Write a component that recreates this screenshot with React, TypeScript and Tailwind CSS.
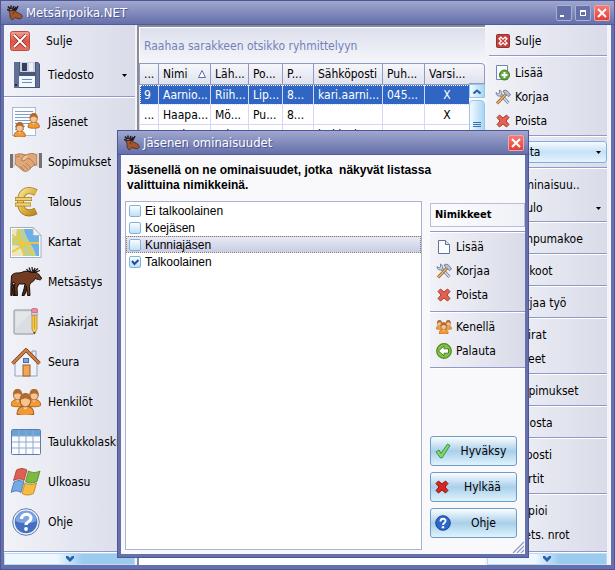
// src/App.tsx
import React, { useState } from 'react';

interface MenuItem {
  label: string;
  icon?: React.ReactNode;
  dropdown?: boolean;
  highlighted?: boolean;
}

interface Trait {
  id: string;
  label: string;
}

// --- Icons ---
const MooseHeadIcon = () => (
  <svg viewBox="0 0 16 16" className="h-4 w-4 shrink-0" aria-hidden="true">
    <path d="M1 1.500 3 4M4 .5v3.500M7 1 5.500 4M0 4.500 4 6l3-2M9 2 7 5M11 1 9 5 6 6" stroke="#211a1c" strokeWidth="1.500" fill="none" />
    <path d="M2 6c2-1 4-1 5.500 0l5 2.500c2 .5 3 2.500 2.500 4-.7 1.500-2.500 1.500-4 1L8 12.500c-1 .2-1.500 1.500-2.500 2.500C4 14.500 2.500 12 3 9Z" fill="#a2542b" stroke="#3c1e14" strokeWidth=".7" />
    <circle cx="6.500" cy="8" r=".6" fill="#1d0e08" />
  </svg>
);

const CloseTileIcon = () => (
  <svg viewBox="0 0 20 20" className="h-5 w-5" aria-hidden="true">
    <defs>
      <linearGradient id="closeTile" x1="0" y1="0" x2="0" y2="1">
        <stop offset="0" stopColor="#f0a396" />
        <stop offset=".5" stopColor="#dd5443" />
        <stop offset="1" stopColor="#e2745f" />
      </linearGradient>
    </defs>
    <rect x=".5" y=".5" width="19" height="19" rx="2" fill="url(#closeTile)" stroke="#bf4b42" />
    <path d="m4 4 12 12M16 4 4 16" stroke="#8c2a25" strokeWidth="3.500" />
    <path d="m4 4 12 12M16 4 4 16" stroke="#fff" strokeWidth="2" />
  </svg>
);

const FloppyIcon = () => (
  <svg viewBox="0 0 26 26" className="h-[26px] w-[26px]" aria-hidden="true">
    <path d="M0 0h24l2 2v24H0Z" fill="#49587a" />
    <path d="M0 0h5v26H0ZM22 1h3v24h-3Z" fill="#5f7094" />
    <rect x="6" y="0" width="15" height="10" fill="#c9d2e0" />
    <rect x="8" y="1" width="5" height="8" fill="#35415c" />
    <rect x="15" y="1" width="4" height="8" fill="#eef2f8" />
    <rect x="5" y="14" width="16" height="11" fill="#f4f8fc" />
    <path d="M8 17.500h10M8 20.500h10" stroke="#5793c9" />
    <rect x="1" y="22" width="2" height="2" fill="#1f2940" />
  </svg>
);

const Person = ({ x, y, s = 1 }: { x: number; y: number; s?: number }) => (
  <g transform={`translate(${x} ${y}) scale(${s})`}>
    <path d="M0 15c0-4 2.500-5.500 6-5.500s6 1.500 6 5.500c-2 1.500-10 1.500-12 0Z" fill="#f09a35" stroke="#a85b1c" strokeWidth=".8" />
    <path d="M4 9.500 6 12l2-2.500" fill="#fde3bd" />
    <ellipse cx="6" cy="5.500" rx="3.800" ry="4.500" fill="#f6c48c" stroke="#9c5a2b" strokeWidth=".8" />
    <path d="M2 6.500C1.500 1.500 3.500 0 6 0s4.500 1.500 4 6.500C9 4 7.500 4.500 6 3.800 4.500 4.500 3 4 2 6.500Z" fill="#b06a32" />
  </g>
);

const MembersIcon = () => (
  <svg viewBox="0 0 28 30" className="h-[30px] w-7" aria-hidden="true">
    <rect x=".5" y=".5" width="23" height="28" fill="#fbfcfe" stroke="#a9bbd2" />
    <path d="M3 4.500h18M3 7.500h18M3 10.500h18M3 13.500h18M3 16.500h18M3 19.500h10M3 22.500h9" stroke="#7f9cc6" />
    <Person x={16} y={6} s={0.95} />
    <Person x={2} y={15} s={0.95} />
  </svg>
);

const HandshakeIcon = () => (
  <svg viewBox="0 0 32 20" className="h-5 w-8" aria-hidden="true">
    <path d="M5 3c4-2 7-1 11 0 4-2 8-2 11 0v10c-3 0-5 1-7 4-3 3-6 3-8 1l-7-6Z" fill="#e0a878" stroke="#9c6a46" strokeWidth=".8" />
    <path d="M16 3c-3 1-5 4-4 6 3 0 4-2 6-3 3 1 5 4 7 7" fill="#efc59c" stroke="#a87148" strokeWidth=".9" />
    <path d="m16 11 5 5M13 13l5 4M10 14l4 4M6 5l4-1" stroke="#a87148" strokeWidth=".8" fill="none" />
    <path d="M0 2h3v14H0ZM29 1h3v15h-3Z" fill="#77726f" />
    <path d="M3 2h2v13H3ZM27 1h2v14h-2Z" fill="#d6d5d8" />
  </svg>
);

const EuroIcon = () => (
  <svg viewBox="0 0 28 30" className="h-[30px] w-7" aria-hidden="true">
    <defs>
      <linearGradient id="euroGold" x1="0" y1="0" x2="1" y2="1">
        <stop offset="0" stopColor="#f7e08e" />
        <stop offset=".5" stopColor="#dfb544" />
        <stop offset="1" stopColor="#b98720" />
      </linearGradient>
    </defs>
    <path d="M24 5.500C13 0 8.500 7 8.500 15s5 14 15.500 9" fill="none" stroke="#a67c22" strokeWidth="7" />
    <path d="M24 5.500C13 0 8.500 7 8.500 15s5 14 15.500 9" fill="none" stroke="url(#euroGold)" strokeWidth="5.400" />
    <path d="M3 12h17M3 17.500h16" stroke="#a67c22" strokeWidth="4" />
    <path d="M3.500 12h16M3.500 17.500h15" stroke="#f0cf6c" strokeWidth="2.600" />
  </svg>
);

const MapIcon = () => (
  <svg viewBox="0 0 32 31" className="h-[31px] w-8" aria-hidden="true">
    <path d="M.5.5H23l8 8v22H.5Z" fill="#fff" stroke="#9fb0c0" />
    <path d="M2 2h20l7 7v20H2Z" fill="#b8d29a" />
    <path d="M14 2h8l7 7v20h-3C25 20 17 15 14 2Z" fill="#6eb0e6" />
    <path d="M2 2h5l-1 7-4 2ZM2 18l7 1 6 10H2Z" fill="#e9e6c0" />
    <path d="M2 15c8 3 14 0 27 1M8 2c1 9 4 12 6 27M2 25l15-9 6 13M2 8l12 8" stroke="#f4c735" strokeWidth="1.800" fill="none" />
    <path d="M23 .5v8h8Z" fill="#eef2f7" stroke="#9fb0c0" strokeWidth=".8" />
  </svg>
);

const MooseIcon = () => (
  <svg viewBox="0 0 32 30" className="h-[30px] w-8" aria-hidden="true">
    <path d="M4 17 2.500 22l.5 6.500h2.300L5 23l3-4M15 17l-1 5-2 6.500h2.300L17 22" fill="#4a2615" stroke="#150d0a" />
    <path
      d="M1.500 9C2.500 6.500 6 5.500 9 6c3-.2 5-2.200 8-1.700 2 .2 4 .2 6 1.200 2-.5 4 0 5.500 1.500L31.500 11c.3 1.500-1.500 2.300-3 1.500L25 11.500c-.5 2-2 3-3.500 4-1.500 1-2 2-2 4l.5 9h-2.400L16.500 20l-1.300-3.500c-2 .8-4.500.7-6.200.2L7 20.500l.5 8H5.200L4.500 20 5 16l-2-1-.8 5-.2 8.500H.8L1 17Z"
      fill="#733b22"
      stroke="#150d0a"
      strokeLinejoin="round"
    />
    <path d="M16.500 2c1 2 3 3 6 3.500M19 .5l1.500 3.500M22 0l.5 4.500M25 1l-2 4M28 1.500l-4.500 3.500M30 3.500 24 5.500" stroke="#150d0a" strokeWidth="1.200" fill="none" />
  </svg>
);

const DocumentPencilIcon = () => (
  <svg viewBox="0 0 26 28" className="h-7 w-[26px]" aria-hidden="true">
    <rect x="1" y="2" width="20" height="24" rx="1" fill="#dadde2" stroke="#8f949d" />
    <path d="M3 4h16L3 20Z" fill="#e4e6ea" />
    <path d="M19 7h5v14l-2.500 5-2.500-5Z" fill="#f6cf59" stroke="#b58421" strokeWidth=".8" />
    <path d="M21.500 7v14" stroke="#d99f26" strokeWidth="1.300" />
    <rect x="18.500" y="4" width="6" height="3" fill="#cfd3da" stroke="#8f949d" strokeWidth=".6" />
    <rect x="18.500" y=".5" width="6" height="4" rx="1.500" fill="#f08a9e" stroke="#c65a72" strokeWidth=".7" />
    <path d="m20.500 24 1 2.500 1-2.500Z" fill="#3c3c3c" />
  </svg>
);

const HouseIcon = () => (
  <svg viewBox="0 0 30 30" className="h-[30px] w-[30px]" aria-hidden="true">
    <path d="M21 4h4v8h-4Z" fill="#e8ecf3" stroke="#8795b0" />
    <path d="M4 14 15 4l11 10v15H4Z" fill="#eef3fa" stroke="#90a2c2" />
    <rect x="12" y="18" width="7" height="11" fill="#f0a659" stroke="#a35c20" />
    <rect x="12.500" y="11.500" width="5" height="4" fill="#7fa6e0" stroke="#4b6cab" />
    <path d="M1.500 16.500 15 3l13.500 13.500" fill="none" stroke="#7d3b18" strokeWidth="3.600" strokeLinejoin="round" />
    <path d="M1.500 16.500 15 3l13.500 13.500" fill="none" stroke="#d38244" strokeWidth="2" />
  </svg>
);

const PeopleIcon = ({ className }: { className: string }) => (
  <svg viewBox="0 0 30 26" className={className} aria-hidden="true">
    <Person x={0} y={0} s={1.1} />
    <Person x={16.5} y={0} s={1.1} />
    <Person x={6} y={4} s={1.4} />
  </svg>
);

const SpreadsheetIcon = () => (
  <svg viewBox="0 0 30 26" className="h-[26px] w-[30px]" aria-hidden="true">
    <rect x=".5" y=".5" width="29" height="25" rx="1" fill="#fbfcff" stroke="#5f7bab" />
    <rect x="1" y="1" width="28" height="6" fill="#66a4d8" />
    <path d="M8 1v24M15 1v24M22 1v24M1 7h28M1 13h28M1 19h28" stroke="#93a9d0" />
  </svg>
);

const WindowsIcon = () => (
  <svg viewBox="0 0 30 28" className="h-7 w-[30px]" aria-hidden="true">
    <path d="M5.500 2c4-2 7-2 10.500 0l-3 10.500c-3-2-7-2-10.500 0Z" fill="#dd6054" stroke="#a63830" strokeWidth=".8" />
    <path d="M17.500 3c4 2 7 2 11.500 0l-3 10.500c-4 2-8 2-11.500 0Z" fill="#7dba41" stroke="#4b8423" strokeWidth=".8" />
    <path d="M3 14c3-2 7-2 10 0l-3 10.500c-3-2-6-2-10 0Z" fill="#76a9e0" stroke="#3f6eb0" strokeWidth=".8" />
    <path d="M14 15c4 2 8 2 11.500 0l-3 10.500c-4 2-8 2-11.500 0Z" fill="#f6bd42" stroke="#bd7d18" strokeWidth=".8" />
  </svg>
);

const HelpIcon = ({ className }: { className: string }) => (
  <svg viewBox="0 0 28 28" className={className} aria-hidden="true">
    <circle cx="14" cy="14" r="13.300" fill="#f3f6fb" stroke="#6178ab" />
    <circle cx="14" cy="14" r="11.300" fill="#4470c2" />
    <path d="M3.500 13a10.500 10.500 0 0 1 21 0c-6 3-15 3-21 0Z" fill="#7ba3e2" />
    <path d="M9.500 11c0-6 9.500-6 9.500-1 0 4-5 3.500-5 7" stroke="#fff" strokeWidth="3.200" fill="none" />
    <circle cx="14" cy="21" r="1.900" fill="#fff" />
  </svg>
);

const SmallHelpIcon = () => (
  <svg viewBox="0 0 16 16" className="h-4 w-4" aria-hidden="true">
    <circle cx="8" cy="8" r="7.300" fill="#2c68c8" stroke="#1c469a" />
    <path d="M5.500 6.500c0-3.500 5-3.500 5-.7C10.500 8 8 7.800 8 10" stroke="#fff" strokeWidth="1.900" fill="none" />
    <circle cx="8" cy="12.200" r="1.200" fill="#fff" />
  </svg>
);

const SmallCloseIcon = () => (
  <svg viewBox="0 0 14 14" className="h-3.5 w-3.5" aria-hidden="true">
    <rect x=".5" y=".5" width="13" height="13" rx="1" fill="#c4423a" stroke="#8f3430" />
    <path d="m3.500 3.500 7 7M10.500 3.500l-7 7" stroke="#fff" strokeWidth="3.800" />
    <path d="m4.500 4.500 5 5M9.500 4.500l-5 5" stroke="#c4423a" strokeWidth="1.300" />
  </svg>
);

const AddIcon = () => (
  <svg viewBox="0 0 16 16" className="h-4 w-4" aria-hidden="true">
    <path d="M1.500.5h11v14h-11Z" fill="#fbfdff" stroke="#6d87b3" />
    <circle cx="9.500" cy="10" r="5" fill="#67a83d" stroke="#3e7b23" />
    <path d="M9.500 7v6M6.500 10h6" stroke="#fff" strokeWidth="2" />
  </svg>
);

const ToolsIcon = () => (
  <svg viewBox="0 0 16 16" className="h-4 w-4" aria-hidden="true">
    <path d="m5 5 8.500 9" stroke="#6e7b90" strokeWidth="3" />
    <path d="m5 5 8.500 9" stroke="#dfe5ee" strokeWidth="1.400" />
    <path d="M1 3.500c0 3 2 4 4.500 3.500C7.500 5 7 2 4.500 1v3L3 5Z" fill="#c9d1de" stroke="#66738a" strokeWidth=".8" />
    <path d="m11 5-9 9.500" stroke="#8d5724" strokeWidth="3" />
    <path d="m11 5-9 9.500" stroke="#f0b66a" strokeWidth="1.600" />
    <path d="M8 2c3-2 5 0 7.500 4l-2 1.500C12 6 10 5.500 8 2Z" fill="#b7c1d1" stroke="#5d6a80" strokeWidth=".8" />
  </svg>
);

const RemoveIcon = ({ fill = '#e4604f', stroke = '#a5403a' }: { fill?: string; stroke?: string }) => (
  <svg viewBox="0 0 14 14" className="h-3.5 w-3.5" aria-hidden="true">
    <path d="M3.500 1 7 4l3.500-3L13 3.500 10 7l3 3.500-2.500 2.500L7 10l-3.500 3L1 10.500 4 7 1 3.500Z" fill={fill} stroke={stroke} strokeLinejoin="round" />
  </svg>
);

const PageIcon = () => (
  <svg viewBox="0 0 12 14" className="h-3.5 w-3" aria-hidden="true">
    <path d="M.5.5h7l4 4v9H.5Z" fill="#fcfdff" stroke="#5f7394" />
    <path d="M7.500.5v4h4" fill="#dde5f0" stroke="#5f7394" />
  </svg>
);

const RestoreIcon = () => (
  <svg viewBox="0 0 16 16" className="h-4 w-4" aria-hidden="true">
    <circle cx="8" cy="8" r="7.300" fill="#85c441" stroke="#4a8a24" strokeWidth="1.200" />
    <path d="M2.500 8 8 3v2.800h4.500v4.400H8V13Z" fill="#fff" stroke="#4f7f35" />
  </svg>
);

const AcceptIcon = () => (
  <svg viewBox="0 0 16 16" className="h-4 w-4" aria-hidden="true">
    <path d="m1 9 3-2 2 3.500L12.500 1 15 2.500 7 15H5.500Z" fill="#82d66c" stroke="#3b9440" strokeLinejoin="round" />
  </svg>
);

const ChevronsDown = () => (
  <svg viewBox="0 0 8 6" className="h-1.5 w-2" aria-hidden="true">
    <path d="M0 0h2l2 2 2-2h2v2L4 6 0 2Z" fill="#2764ad" />
  </svg>
);

const DropArrow = () => (
  <svg viewBox="0 0 5 3" className="h-[3px] w-[5px]" aria-hidden="true">
    <path d="M0 0h5L2.500 3Z" fill="#000" />
  </svg>
);

// --- Data ---
const mainMenu: MenuItem[] = [
  { label: 'Jäsenet', icon: <MembersIcon /> },
  { label: 'Sopimukset', icon: <HandshakeIcon /> },
  { label: 'Talous', icon: <EuroIcon /> },
  { label: 'Kartat', icon: <MapIcon /> },
  { label: 'Metsästys', icon: <MooseIcon /> },
  { label: 'Asiakirjat', icon: <DocumentPencilIcon /> },
  { label: 'Seura', icon: <HouseIcon /> },
  { label: 'Henkilöt', icon: <PeopleIcon className="h-[26px] w-[30px]" /> },
  { label: 'Taulukkolaskin', icon: <SpreadsheetIcon /> },
  { label: 'Ulkoasu', icon: <WindowsIcon /> },
  { label: 'Ohje', icon: <HelpIcon className="h-7 w-7" /> },
];

const actionGroups: MenuItem[][] = [
  [{ label: 'Sulje', icon: <SmallCloseIcon /> }],
  [
    { label: 'Lisää', icon: <AddIcon /> },
    { label: 'Korjaa', icon: <ToolsIcon /> },
    { label: 'Poista', icon: <RemoveIcon /> },
  ],
  [{ label: 'Lista', dropdown: true, highlighted: true }],
  [{ label: 'Ominaisuu..' }, { label: 'Taulo', dropdown: true }],
  [{ label: 'Ampumakoe' }],
  [{ label: 'Talkoot' }],
  [{ label: 'Kirjaa työ' }],
  [{ label: 'Koirat' }, { label: 'Aseet' }],
  [{ label: 'Sopimukset' }],
  [{ label: 'Tulosta' }],
  [{ label: 'E-posti' }, { label: 'Kortit' }],
  [{ label: 'Kopioi' }, { label: 'Mets. nrot' }],
];

const traitActions: MenuItem[][] = [
  [
    { label: 'Lisää', icon: <PageIcon /> },
    { label: 'Korjaa', icon: <ToolsIcon /> },
    { label: 'Poista', icon: <RemoveIcon /> },
  ],
  [
    { label: 'Kenellä', icon: <PeopleIcon className="h-3.5 w-4" /> },
    { label: 'Palauta', icon: <RestoreIcon /> },
  ],
];

const columns = [
  { header: '...', width: 'w-[19px]' },
  { header: 'Nimi', width: 'w-[52px]', sorted: true },
  { header: 'Läh...', width: 'w-[38px]' },
  { header: 'Po...', width: 'w-[34px]' },
  { header: 'P...', width: 'w-[31px]' },
  { header: 'Sähköposti', width: 'w-[69px]' },
  { header: 'Puh...', width: 'w-[42px]' },
  { header: 'Varsi...', width: 'w-[45px]' },
];

const rows = [
  ['9', 'Aarnio...', 'Riih...', 'Lip...', '8...', 'kari.aarni...', '045...', 'X'],
  ['...', 'Haapa...', 'Mö...', 'Pu...', '8...', '', '', 'X'],
  ['4', 'Harju...', 'Toi...', 'Pu...', '8...', 'jarkko.h...', '045...', 'X'],
];

const traits: Trait[] = [
  { id: 'ei', label: 'Ei talkoolainen' },
  { id: 'koe', label: 'Koejäsen' },
  { id: 'kunnia', label: 'Kunniajäsen' },
  { id: 'talkoo', label: 'Talkoolainen' },
];

// --- Shared pieces ---
const Separator = () => (
  <div className="shrink-0">
    <div className="h-px bg-[#9298cc]" />
    <div className="h-px bg-white" />
  </div>
);

const TitleBar = ({ title, children }: { title: string; children?: React.ReactNode }) => (
  <header className="flex h-6 shrink-0 items-center gap-[3px] border-b border-[#515a9d] bg-linear-to-b from-[#a0a7ce] to-[#6570aa] pl-1.5 pr-1">
    <MooseHeadIcon />
    <h1 className="flex-1 text-[13px] text-white [text-shadow:1px_1px_0_#4c5590]">{title}</h1>
    {children}
  </header>
);

const CloseButton = () => (
  <button type="button" aria-label="Sulje ikkuna" className="grid h-4 w-4 place-items-center rounded-[2px] border border-[#f4a7a2] bg-linear-to-b from-[#f37a73] to-[#e63b35]">
    <svg viewBox="0 0 10 10" className="h-2.5 w-2.5" aria-hidden="true">
      <path d="m1 1 8 8M9 1 1 9" stroke="#fff" strokeWidth="2" />
    </svg>
  </button>
);

const MoreButton = () => (
  <button type="button" aria-label="Lisää valintoja" className="grid h-3 w-full shrink-0 place-items-center border border-[#b9daf4] bg-linear-to-r from-[#eef7fe] from-40% to-[#9ccbf0] to-60%">
    <ChevronsDown />
  </button>
);

const ActionRow = ({ item }: { item: MenuItem }) => (
  <button
    type="button"
    className={`flex w-full items-center px-1.5 text-left ${item.dropdown ? 'h-[22px]' : 'h-6'} ${
      item.highlighted
        ? 'mb-0.5 rounded-[3px] bg-linear-to-b from-[#fbfdff] via-[#c5e2f7] to-[#e8f6fe] outline-1 -outline-offset-1 outline-[#7fb0dd]'
        : ''
    }`}
  >
    <span className="grid w-4 shrink-0 place-items-center">{item.icon}</span>
    <span className="ml-1 flex-1 whitespace-nowrap">{item.label}</span>
    {item.dropdown && <DropArrow />}
  </button>
);

// --- Panels ---
const MainMenu = () => (
  <nav className="flex w-[131px] shrink-0 flex-col bg-linear-to-r from-[#f2f3f8] to-[#d9dbe8]">
    <button type="button" className="mt-1 flex h-6 items-center pl-1.5 text-left">
      <CloseTileIcon />
      <span className="ml-4">Sulje</span>
    </button>
    <button type="button" className="mt-2 flex h-7 items-center pl-2.5 pr-2 text-left">
      <FloppyIcon />
      <span className="ml-2 flex-1">Tiedosto</span>
      <DropArrow />
    </button>
    <div className="mb-1 mt-[7px]"><Separator /></div>
    {mainMenu.map(item => (
      <button key={item.label} type="button" className="flex h-10 shrink-0 items-center pl-1.5 text-left">
        <span className="grid w-8 shrink-0 place-items-center">{item.icon}</span>
        <span className="ml-1 overflow-hidden whitespace-nowrap pl-0.5">{item.label}</span>
      </button>
    ))}
    <div className="mt-auto">
      <Separator />
      <MoreButton />
    </div>
  </nav>
);

const MemberTable = () => (
  <main className="flex min-w-0 flex-1 flex-col border-l-2 border-t-2 border-[#8b8b93] bg-white">
    <p className="flex h-9 shrink-0 items-center border-l border-t border-white bg-linear-to-b from-[#dcdfec] to-[#f6f7fb] pl-1 text-[#7480b8]">
      Raahaa sarakkeen otsikko ryhmittelyyn
    </p>
    <div className="flex min-h-0 flex-1">
      <div className="min-w-0 flex-1 overflow-hidden">
        <table className="w-full table-fixed border-collapse">
          <thead>
            <tr className="h-[21px] bg-linear-to-b from-[#f6f7fb] to-[#dfe1ec]">
              {columns.map((col, i) => (
                <th key={i} className={`border border-[#8f99c6] px-1 text-left font-normal whitespace-nowrap ${col.width}`}>
                  <span className="flex items-center justify-between">
                    {col.header}
                    {col.sorted && (
                      <svg viewBox="0 0 8 8" className="h-2 w-2" aria-hidden="true">
                        <path d="M4 .5 7.500 7.500h-7Z" fill="#fff" stroke="#5b6bb3" />
                      </svg>
                    )}
                  </span>
                </th>
              ))}
            </tr>
          </thead>
          <tbody>
            {rows.map((row, r) => (
              <tr key={r} className={r === 0 ? 'h-5 bg-[#2f66c3] text-white outline-1 -outline-offset-1 outline-dotted outline-white' : 'h-5'}>
                {row.map((cell, c) => (
                  <td key={c} className={`overflow-hidden border border-[#d6d7f4] px-1 whitespace-nowrap ${c === 7 ? 'text-center' : ''}`}>
                    {cell}
                  </td>
                ))}
              </tr>
            ))}
          </tbody>
        </table>
      </div>
      <div className="flex w-4 shrink-0 flex-col">
        <div className="h-[21px] rounded-tr border border-l-0 border-[#8f99c6] bg-linear-to-b from-[#f6f7fb] to-[#dfe1ec]" />
        <button type="button" aria-label="Vieritä ylös" className="grid h-3.5 place-items-center border border-[#9cc6e8] bg-linear-to-r from-[#f2faff] to-[#a9d5f5]">
          <svg viewBox="0 0 8 5" className="h-[5px] w-2" aria-hidden="true">
            <path d="m.5 4.500 3.500-3 3.500 3" stroke="#2d5fa5" strokeWidth="2" fill="none" />
          </svg>
        </button>
        <div className="mt-0.5 flex h-12 flex-col items-center justify-center gap-px rounded-sm border border-[#9cc6e8] bg-linear-to-r from-[#f2faff] to-[#a9d5f5]">
          <span className="h-px w-2 bg-[#3a6fb0]" />
          <span className="h-px w-2 bg-[#3a6fb0]" />
          <span className="h-px w-2 bg-[#3a6fb0]" />
        </div>
      </div>
    </div>
  </main>
);

const ActionPanel = () => (
  <aside className="flex w-[120px] shrink-0 flex-col bg-linear-to-r from-[#f2f3f8] to-[#d9dbe8]">
    <div className="flex flex-1 flex-col pl-0.5 pt-1">
      {actionGroups.map((group, i) => (
        <div key={i}>
          {i > 0 && <div className="pb-1 pt-0.5"><Separator /></div>}
          {group.map(item => <ActionRow key={item.label} item={item} />)}
        </div>
      ))}
    </div>
    <Separator />
    <MoreButton />
  </aside>
);

const DialogButton = ({ icon, label }: { icon: React.ReactNode; label: string }) => (
  <button type="button" className="flex h-[30px] items-center rounded-[3px] border border-[#6f9bc9] bg-linear-to-b from-[#fafdff] via-[#a9cfea] to-[#dff3fd] pl-1">
    {icon}
    <span className="flex-1 text-center">{label}</span>
  </button>
);

const TraitsDialog = () => {
  const [checked, setChecked] = useState<string[]>(['talkoo']);
  const [selected, setSelected] = useState('kunnia');

  const toggle = (id: string) => {
    setSelected(id);
    setChecked(prev => (prev.includes(id) ? prev.filter(t => t !== id) : [...prev, id]));
  };

  return (
    <section role="dialog" aria-label="Jäsenen ominaisuudet" className="absolute bottom-[11px] left-[116px] right-[85px] top-[129px] flex flex-col border border-[#4d5697] bg-[#6670ab]">
      <TitleBar title="Jäsenen ominaisuudet">
        <CloseButton />
      </TitleBar>
      <div className="mx-[3px] mb-[3px] flex min-h-0 flex-1 flex-col bg-[#f9f9fc] pl-1">
        <p className="px-0.5 pt-2 font-['Liberation_Sans',sans-serif] text-xs font-bold leading-[15px]">
          Jäsenellä on ne ominaisuudet, jotka&nbsp; näkyvät listassa
          <br />
          valittuina nimikkeinä.
        </p>
        <div className="mt-2 flex min-h-0 flex-1 gap-2">
          <ul className="mb-1 min-w-0 flex-1 border border-[#a9b2d3] bg-white font-['Liberation_Sans',sans-serif]">
            {traits.map(trait => (
              <li
                key={trait.id}
                className={`flex h-[17px] items-center gap-1 border pl-0.5 ${
                  trait.id === selected ? 'border-dotted border-[#8a7c5c] bg-linear-to-b from-[#e9eaf5] to-[#c9cce4]' : 'border-transparent'
                }`}
              >
                <span className="grid shrink-0">
                  <input
                    id={trait.id}
                    type="checkbox"
                    checked={checked.includes(trait.id)}
                    onChange={() => toggle(trait.id)}
                    className="peer col-start-1 row-start-1 h-3 w-3 appearance-none rounded-[2px] border border-[#7fb2de] bg-linear-to-b from-[#fafdff] to-[#bfe0f6]"
                  />
                  <svg viewBox="0 0 12 12" className="pointer-events-none invisible col-start-1 row-start-1 h-3 w-3 peer-checked:visible" aria-hidden="true">
                    <path d="m3 5 2.500 3L9.500 4" stroke="#1f4f94" strokeWidth="2" fill="none" />
                  </svg>
                </span>
                <label htmlFor={trait.id}>{trait.label}</label>
              </li>
            ))}
          </ul>
          <div className="flex w-[95px] shrink-0 flex-col">
            <h2 className="mt-0.5 flex h-6 items-center border border-[#b9bdd9] bg-linear-to-r from-[#fcfcfe] to-[#f0f1f6] pl-1 text-[11px] font-bold">
              Nimikkeet
            </h2>
            <div className="mt-1 bg-linear-to-r from-[#f2f3f8] to-[#d9dbe8]">
              {traitActions.map((group, i) => (
                <div key={i}>
                  <Separator />
                  <div className="pb-1 pt-0.5">
                    {group.map(item => <ActionRow key={item.label} item={item} />)}
                  </div>
                </div>
              ))}
              <Separator />
            </div>
            <div className="mb-4 mr-2 mt-auto flex flex-col gap-1.5">
              <DialogButton icon={<AcceptIcon />} label="Hyväksy" />
              <DialogButton icon={<RemoveIcon fill="#d9251f" stroke="#8e1714" />} label="Hylkää" />
              <DialogButton icon={<SmallHelpIcon />} label="Ohje" />
            </div>
          </div>
        </div>
      </div>
      <svg viewBox="0 0 12 12" className="absolute bottom-1 right-1 h-3 w-3" aria-hidden="true">
        <path d="M1 12 12 1M5 12l7-7M9 12l3-3" stroke="#8d96c4" strokeWidth="1.200" />
      </svg>
    </section>
  );
};

const App: React.FC = () => (
  <div className="relative flex h-screen flex-col overflow-hidden border border-[#4d5697] bg-[#6670ab] font-['DejaVu_Sans_Condensed','DejaVu_Sans',sans-serif] text-xs text-black">
    <TitleBar title="Metsänpoika.NET">
      <button type="button" aria-label="Pienennä" className="flex h-4 w-4 items-end rounded-[2px] border border-[#a9b0d6] bg-[#6570aa] p-[3px]">
        <span className="h-0.5 w-1 bg-white" />
      </button>
      <button type="button" aria-label="Suurenna" className="grid h-4 w-4 place-items-center rounded-[2px] border border-[#a9b0d6] bg-[#6570aa]">
        <span className="h-1.5 w-1.5 border border-t-2 border-white" />
      </button>
      <CloseButton />
    </TitleBar>
    <div className="mx-[3px] mb-1 flex min-h-0 flex-1 gap-0.5 bg-[#f3f4f9] pr-1">
      <MainMenu />
      <MemberTable />
      <ActionPanel />
    </div>
    <TraitsDialog />
  </div>
);

export default App;
